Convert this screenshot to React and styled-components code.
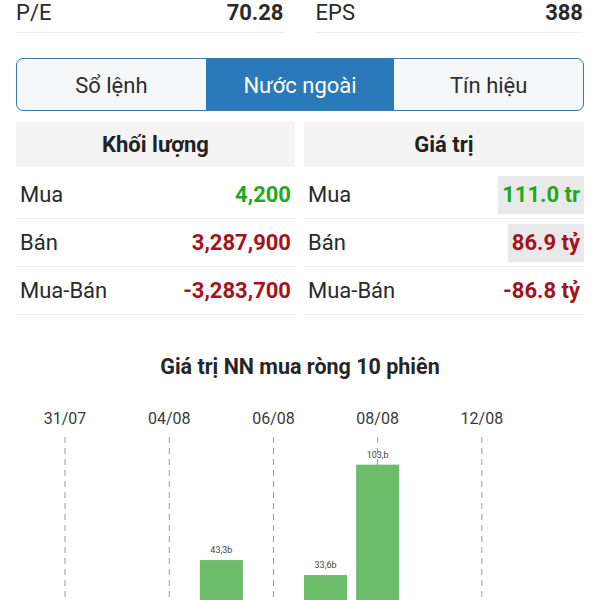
import React from 'react';
import styled, { createGlobalStyle } from 'styled-components';

const GlobalStyle = createGlobalStyle`
    body{
        margin: 0;
        background: #ffffff;
        font-family: Roboto, "Noto Sans", "Liberation Sans", sans-serif;
        color: #222222;
        overflow: hidden;
    }
`

const stats = [
    { label: 'P/E', value: '70.28' },
    { label: 'EPS', value: '388' },
];

const tabs = ['Sổ lệnh', 'Nước ngoài', 'Tín hiệu'];

const tables = [
    {
        title: 'Khối lượng',
        rows: [
            { label: 'Mua', value: '4,200', tone: 'up' },
            { label: 'Bán', value: '3,287,900', tone: 'down' },
            { label: 'Mua-Bán', value: '-3,283,700', tone: 'down' },
        ],
    },
    {
        title: 'Giá trị',
        rows: [
            { label: 'Mua', value: '111.0 tr', tone: 'up', marked: true },
            { label: 'Bán', value: '86.9 tỷ', tone: 'down', marked: true },
            { label: 'Mua-Bán', value: '-86.8 tỷ', tone: 'down' },
        ],
    },
];

const sessions = [
    { date: '31/07', value: 0, show: true },
    { date: '01/08', value: 0 },
    { date: '04/08', value: 0, show: true },
    { date: '05/08', value: 43.3, text: '43,3b' },
    { date: '06/08', value: 0, show: true },
    { date: '07/08', value: 33.6, text: '33,6b' },
    { date: '08/08', value: 105, text: '103,b', show: true },
    { date: '09/08', value: 0 },
    { date: '12/08', value: 0, show: true },
    { date: '13/08', value: 0 },
];

const SLOT = 52.1;
const LEFT = 23;
const BASE = 232;
const SCALE = 1.546;

function NetChart() {
    return (
        <ChartSvg width="568" height="220" viewBox="0 0 568 220">
            {sessions.map((s, i) => {
                const cx = LEFT + SLOT * (i + 0.5);
                if (!s.show) return null;
                return (
                    <g key={s.date}>
                        <text x={cx} y="29" textAnchor="middle" fontSize="16" fill="#3a3a3a">{s.date}</text>
                        <line x1={cx} y1="42" x2={cx} y2="220" stroke="#9a9a9a" strokeWidth="1" strokeDasharray="6 5" />
                    </g>
                );
            })}
            {sessions.map((s, i) => {
                if (!s.value) return null;
                const cx = LEFT + SLOT * (i + 0.5);
                const top = BASE - s.value * SCALE;
                return (
                    <g key={'b' + s.date}>
                        <text x={cx} y={top - 7} textAnchor="middle" fontSize="9" fill="#444444">{s.text}</text>
                        <rect x={cx - 21.5} y={top} width="43" height={BASE - top} fill="#6bbd69" />
                    </g>
                );
            })}
        </ChartSvg>
    );
}

function App() {
    return (
        <Page>
            <GlobalStyle />
            <StatGrid>
                {stats.map((s) => (
                    <StatRow key={s.label}>
                        <span>{s.label}</span>
                        <StatValue>{s.value}</StatValue>
                    </StatRow>
                ))}
            </StatGrid>

            <Tabs>
                {tabs.map((t, id) => (
                    <Tab key={t} $active={id === 1}>{t}</Tab>
                ))}
            </Tabs>

            <TableGrid>
                {tables.map((table) => (
                    <Table key={table.title}>
                        <TableHead>{table.title}</TableHead>
                        {table.rows.map((row) => (
                            <Row key={row.label}>
                                <RowLabel>{row.label}</RowLabel>
                                <RowValue $tone={row.tone} $marked={row.marked}>{row.value}</RowValue>
                            </Row>
                        ))}
                    </Table>
                ))}
            </TableGrid>

            <ChartSection>
                <ChartTitle>Giá trị NN mua ròng 10 phiên</ChartTitle>
                <NetChart />
            </ChartSection>
        </Page>
    );
}

export default App;

const Page = styled.div`
    width: 600px;
    height: 600px;
    box-sizing: border-box;
    padding: 0 16px;
    overflow: hidden;
`

const StatGrid = styled.div`
    display: grid;
    grid-template-columns: 1fr 1fr;
    column-gap: 31px;
`

const StatRow = styled.div`
    display: flex;
    justify-content: space-between;
    align-items: center;
    height: 25px;
    padding-bottom: 7px;
    border-bottom: 1px solid #ededed;
    font-size: 22px;
    line-height: 25px;
    color: #2a2a2a;
    margin-right: 1px;
`

const StatValue = styled.span`
    font-weight: 700;
`

const Tabs = styled.div`
    display: flex;
    margin-top: 25px;
    height: 51px;
    border: 1.5px solid #3f7aa6;
    border-radius: 7px;
    overflow: hidden;
    background: #f5f7f8;
`

const Tab = styled.div`
    flex: 1;
    display: flex;
    align-items: center;
    justify-content: center;
    padding-top: 2px;
    font-size: 22px;
    color: ${(p) => (p.$active ? '#ffffff' : '#2d2d2d')};
    background: ${(p) => (p.$active ? '#2a7ab9' : 'transparent')};
`

const TableGrid = styled.div`
    display: grid;
    grid-template-columns: 279px 280px;
    column-gap: 9px;
    margin-top: 11px;
`

const Table = styled.div`
    display: flex;
    flex-direction: column;
`

const TableHead = styled.div`
    height: 45px;
    display: flex;
    align-items: center;
    justify-content: center;
    background: #f4f4f4;
    font-size: 22px;
    font-weight: 700;
    color: #222222;
    margin-bottom: 4px;
`

const Row = styled.div`
    display: flex;
    justify-content: space-between;
    align-items: center;
    height: 47px;
    border-bottom: 1px solid #ececec;
    padding-left: 4px;
`

const RowLabel = styled.span`
    font-size: 22px;
    color: #2a2a2a;
`

const RowValue = styled.span`
    font-size: 22px;
    font-weight: 700;
    line-height: 38px;
    padding: 0 4px;
    color: ${(p) => (p.$tone === 'up' ? '#1ea823' : '#a5121b')};
    background: ${(p) => (p.$marked ? '#e9e9e9' : 'transparent')};
`

const ChartSection = styled.div`
    margin-top: 40px;
`

const ChartTitle = styled.div`
    text-align: center;
    font-size: 21.5px;
    line-height: 24px;
    font-weight: 700;
    color: #262626;
`

const ChartSvg = styled.svg`
    display: block;
    margin-top: 16px;
    font-family: Roboto, "Noto Sans", sans-serif;
`
